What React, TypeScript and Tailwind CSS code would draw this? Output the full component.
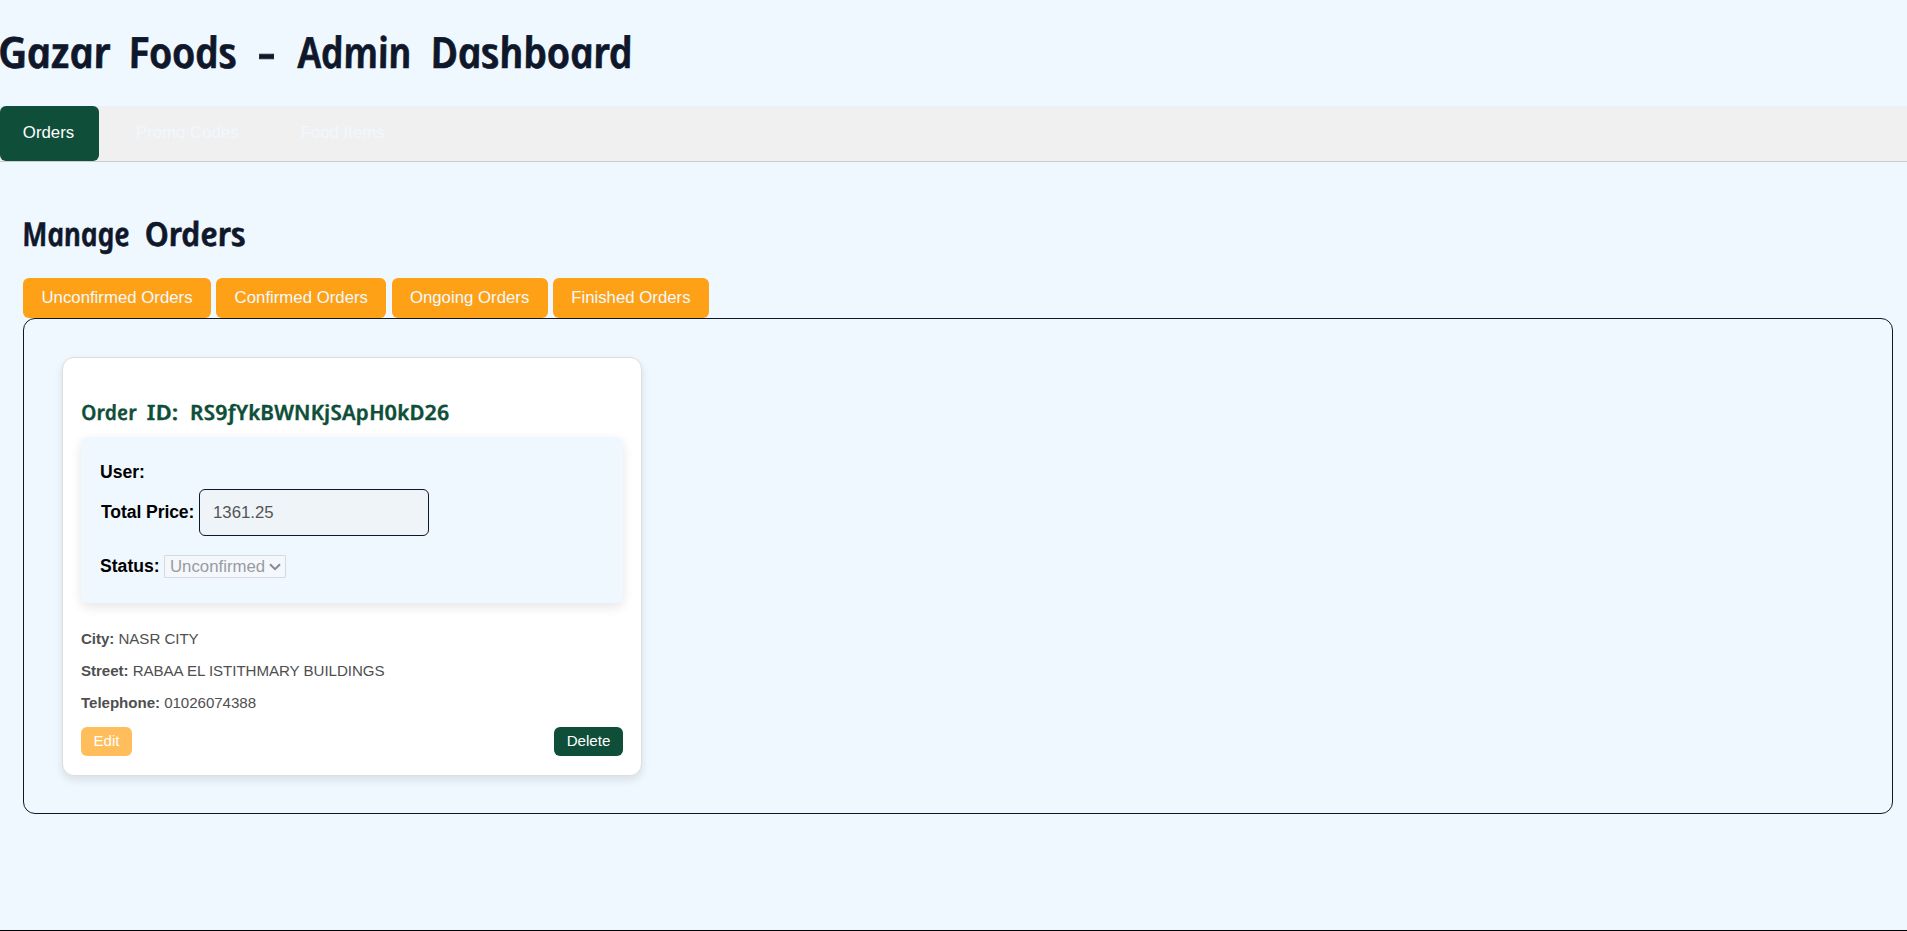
import React from "react";

const tabs = ["Promo Codes", "Food Items"];
const filters = [
  { label: "Unconfirmed Orders", width: "w-[188px]" },
  { label: "Confirmed Orders", width: "w-[170px]" },
  { label: "Ongoing Orders", width: "w-[156px]" },
  { label: "Finished Orders", width: "w-[156px]" },
];
const details = [
  { label: "City:", value: "NASR CITY" },
  { label: "Street:", value: "RABAA EL ISTITHMARY BUILDINGS" },
  { label: "Telephone:", value: "01026074388" },
];

type Piece = { text: string; slot: string; fit: string };

const title: Piece[] = [
  { text: "Gazar", slot: "w-[130px]", fit: "scale-x-[0.98]" },
  { text: "Foods", slot: "w-[131px]", fit: "scale-x-[0.95]" },
  { text: "-", slot: "w-[38px]", fit: "scale-x-[1.3]" },
  { text: "Admin", slot: "w-[133px]", fit: "scale-x-[0.91]" },
  { text: "Dashboard", slot: "w-[210px]", fit: "scale-x-[0.955]" },
];
const heading: Piece[] = [
  { text: "Manage", slot: "w-[123px]", fit: "scale-x-[0.88]" },
  { text: "Orders", slot: "w-[110px]", fit: "scale-x-[1]" },
];
const orderId: Piece[] = [
  { text: "Order", slot: "w-[66px]", fit: "scale-x-[1]" },
  { text: "ID:", slot: "w-[43px]", fit: "scale-x-[1.15]" },
  { text: "RS9fYkBWNKjSApH0kD26", slot: "w-[262px]", fit: "scale-x-[1.075]" },
];

// Upright casual lettering for the headings, one slot per word.
function Casual({ pieces }: { pieces: Piece[] }) {
  return (
    <>
      {pieces.map((p) => (
        <span key={p.text} className={`${p.slot} shrink-0`}>
          <span className={`${p.fit} inline-block origin-bottom-left skew-x-[11deg] whitespace-nowrap`}>{p.text}</span>{" "}
        </span>
      ))}
    </>
  );
}

export default function App() {
  return (
    <div className="flex h-[931px] flex-col overflow-hidden border-b border-black bg-[#f0f8ff] font-['Liberation_Sans',Arial,sans-serif] text-[16.8px] text-black">
      <h1 className="flex h-[106px] pt-[23px] pl-[3px] font-['Noto_Sans',sans-serif] text-[43px] leading-[58px] font-semibold tracking-[-0.6px] text-[#0f172a] italic [-webkit-text-stroke:0.7px_#0f172a]">
        <Casual pieces={title} />
      </h1>

      <nav className="flex h-[56px] border-b border-[#ccc] bg-[#f0f0f0] text-[#f0f8ff]">
        <button className="mr-[13px] w-[99px] rounded-[6px] bg-[#0f4f3a] pr-[2px] pb-[2px] text-white">Orders</button>
        {tabs.map((t) => (
          <button key={t} className="mr-[14px] px-[24px] pb-[2px]">{t}</button>
        ))}
      </nav>

      <main className="pt-[47px] pr-[14px] pl-[23px]">
        <h2 className="flex h-[69px] pl-[3px] font-['Noto_Sans',sans-serif] text-[33px] leading-[50px] font-semibold tracking-[-0.3px] text-[#0f172a] italic [-webkit-text-stroke:0.6px_#0f172a]">
          <Casual pieces={heading} />
        </h2>

        <div className="flex gap-[5.3px]">
          {filters.map((f) => (
            <button key={f.label} className={`${f.width} h-[40px] rounded-[6px] bg-[#ffa116] whitespace-nowrap text-[#f0f8ff]`}>
              {f.label}
            </button>
          ))}
        </div>

        <section className="h-[496px] rounded-[12px] border border-[#0f172a] pt-[38px] pl-[38px]">
          <article className="flex h-[419px] w-[580px] flex-col rounded-[12px] border border-[#ddd] bg-white px-[18px] pt-[38px] shadow-[0_4px_8px_rgba(0,0,0,0.1)]">
            <h3 className="flex h-[41px] pl-[3px] font-['Noto_Sans',sans-serif] text-[21px] leading-[33px] font-semibold text-[#0f4f3a] italic [-webkit-text-stroke:0.3px_#0f4f3a]">
              <Casual pieces={orderId} />
            </h3>

            <div className="h-[166px] shrink-0 rounded-[6px] bg-[#f0f8ff] pt-[20px] pl-[19px] shadow-[0_4px_12px_rgba(0,0,0,0.1)]">
              <p className="h-[32px] text-[17.6px] leading-[30px] font-bold">User:</p>
              <div className="flex h-[47px] items-center gap-[4px]">
                <label className="w-[95px] pl-[1px] text-[17.6px] font-bold tracking-[-0.1px] whitespace-nowrap">Total Price:</label>
                <input disabled value="1361.25" readOnly className="h-[47px] w-[230px] rounded-[6px] border border-[#0f172a] bg-[#eff4f9] px-[13px] text-[16.8px] text-[#545454]" />
              </div>
              <div className="mt-[19px] flex h-[23px] items-center gap-[4px]">
                <label className="w-[60px] text-[17.6px] font-bold">Status:</label>
                <div className="flex h-[23px] w-[122px] items-center justify-between rounded-[1px] border border-[#d5dae1] bg-[#f4f8fd] pr-[4px] pl-[5px] text-[#999b9e]">
                  <span>Unconfirmed</span>
                  <svg width="12" height="8" viewBox="0 0 12 8" fill="none" stroke="#858a90" strokeWidth="2">
                    <path d="M1 1.2 6 6.2 11 1.2" />
                  </svg>
                </div>
              </div>
            </div>

            <div className="mt-[20px] text-[15.12px] tracking-[-0.05px] text-[#4f4f4f]">
              {details.map((d) => (
                <p key={d.label} className="h-[32px] leading-[32px] whitespace-nowrap">
                  <b>{d.label}</b> {d.value}
                </p>
              ))}
            </div>

            <div className="mt-[8px] flex justify-between text-[15.12px] text-white">
              <button className="h-[29px] w-[51px] rounded-[6px] bg-[#ffbd5c]">Edit</button>
              <button className="h-[29px] w-[69px] rounded-[6px] bg-[#0f4f3a]">Delete</button>
            </div>
          </article>
        </section>
      </main>
    </div>
  );
}
